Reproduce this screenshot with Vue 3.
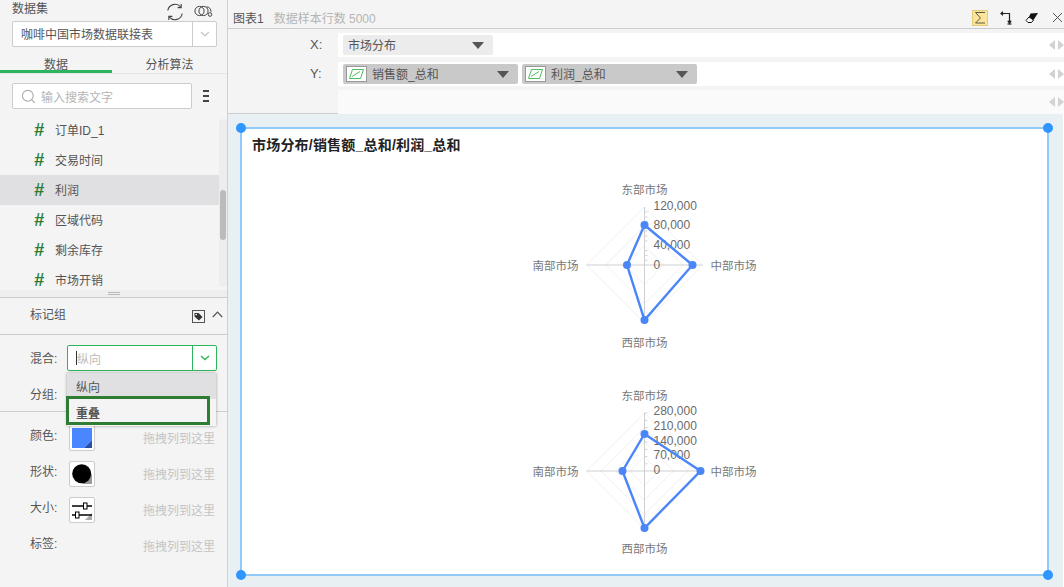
<template>
  <div class="app">
    <aside class="side">
      <div class="ds-head">
        <span class="ds-label">数据集</span>
        <svg class="ic-refresh" width="18" height="18" viewBox="0 0 18 18" fill="none" stroke="#444" stroke-width="1.1">
          <path d="M1.8 7.5A7.4 7.4 0 0 1 14.6 3.8" />
          <path d="M16.2 10.5A7.4 7.4 0 0 1 3.4 14.2" />
          <path d="M15.2 1v3.6h-3.6" />
          <path d="M2.8 17v-3.6h3.6" />
        </svg>
        <svg class="ic-link" width="20" height="14" viewBox="0 0 20 14" fill="none" stroke="#444" stroke-width="1">
          <circle cx="5.5" cy="7" r="4.6" />
          <circle cx="9.5" cy="7" r="4.6" />
          <path d="M12.5 2.8a4.6 4.6 0 0 1 4.5 5" />
          <circle cx="16" cy="10.5" r="1.8" />
        </svg>
      </div>
      <div class="ds-select">
        <span class="ds-name">咖啡中国市场数据联接表</span>
        <span class="ds-arrow">
          <svg width="10" height="6" viewBox="0 0 10 6" fill="none" stroke="#c4c4c4" stroke-width="1.2"><path d="M1 1l4 3.6L9 1" /></svg>
        </span>
      </div>
      <div class="tabs">
        <div class="tab on">数据</div>
        <div class="tab">分析算法</div>
      </div>
      <div class="search-row">
        <div class="search">
          <svg width="15" height="15" viewBox="0 0 15 15" fill="none" stroke="#aaa" stroke-width="1.1">
            <circle cx="6.8" cy="6.8" r="5.4" />
            <path d="M10.8 10.8l3 3" />
          </svg>
          <span>输入搜索文字</span>
        </div>
        <div class="menu"><i></i><i></i><i></i></div>
      </div>
      <div class="list">
        <div v-for="f in fields" :key="f" class="row" :class="{ cur: f === '利润' }">
          <span class="hash">#</span>
          <span>{{ f }}</span>
        </div>
        <div class="track"><div class="thumb"></div></div>
      </div>
      <div class="split"><i></i><i></i></div>
      <div class="mark-head">
        <span class="mark-title">标记组</span>
        <svg class="ic-tag" width="13" height="13" viewBox="0 0 13 13">
          <rect x="0.5" y="0.5" width="12" height="12" fill="#f4f4f4" stroke="#555" />
          <path d="M2.5 3h4l4 4-3.6 3.4-4.4-4z" fill="#333" />
          <circle cx="4.2" cy="4.6" r="0.8" fill="#fff" />
        </svg>
        <svg class="ic-up" width="11" height="7" viewBox="0 0 11 7" fill="none" stroke="#555" stroke-width="1.2"><path d="M0.8 6L5.5 1.2 10.2 6" /></svg>
      </div>
      <div class="form">
        <div class="form-row">
          <label>混合:</label>
          <div class="combo">
            <span class="combo-text"><b class="caret"></b>纵向</span>
            <span class="combo-arrow">
              <svg width="10" height="6" viewBox="0 0 10 6" fill="none" stroke="#2db55d" stroke-width="1.4"><path d="M1 1l4 3.6L9 1" /></svg>
            </span>
          </div>
          <div class="drop">
            <div class="opt first">纵向</div>
            <div class="opt sel">重叠</div>
          </div>
        </div>
        <div class="form-row group"><label>分组:</label></div>
      </div>
      <div class="props">
        <div v-for="p in props" :key="p.name" class="prop">
          <label>{{ p.name }}:</label>
          <div v-if="p.kind" class="swatch">
            <div v-if="p.kind === 'color'" class="sw-color"></div>
            <svg v-else-if="p.kind === 'shape'" width="20" height="20" viewBox="0 0 20 20">
              <path d="M20 10v10H10z" fill="#999" />
              <circle cx="9.7" cy="9.7" r="9.5" fill="#000" />
            </svg>
            <svg v-else width="20" height="20" viewBox="0 0 20 20">
              <path d="M20 13v7h-7z" fill="#aaa" />
              <path d="M0 6h20M0 15h20" stroke="#000" stroke-width="1.6" />
              <rect x="11.5" y="3" width="3.5" height="6" fill="#fff" stroke="#000" />
              <rect x="3.5" y="12" width="3.5" height="6" fill="#fff" stroke="#000" />
            </svg>
          </div>
          <span class="hint">拖拽列到这里</span>
        </div>
      </div>
    </aside>

    <main class="main">
      <header class="top">
        <span class="chart-name">图表1</span>
        <span class="sample">数据样本行数 5000</span>
        <div class="tools">
          <span class="sigma">
            <svg width="14" height="14" viewBox="0 0 14 14" fill="none" stroke="#5c5a3c" stroke-width="1">
              <path d="M12 1.5H2.5L7.5 7l-5 5H12" />
            </svg>
          </span>
          <svg class="t1" width="14" height="14" viewBox="0 0 14 14" fill="none" stroke="#222" stroke-width="1.2">
            <path d="M1 2.5h8.5v9" />
            <path d="M3 0.8L1 2.5l2 1.7" fill="#222" />
            <path d="M7.8 9.8l1.7 2.4 1.7-2.4" fill="#222" />
            <path d="M7.5 13h4" />
          </svg>
          <svg class="t2" width="14" height="12" viewBox="0 0 14 12">
            <path d="M5.5 1.5L13 1 8.5 8 4 5z" fill="#111" />
            <path d="M4 5l4.5 3-2 2.5H3L1 8.5z" fill="#fff" stroke="#111" />
          </svg>
          <svg class="t3" width="11" height="11" viewBox="0 0 11 11" fill="none" stroke="#555" stroke-width="1"><path d="M1 1l9 9M10 1l-9 9" /></svg>
        </div>
      </header>

      <section class="shelves">
        <div class="shelf">
          <span class="axis-name">X:</span>
          <div class="slot">
            <div class="pill light"><span class="pill-text">市场分布</span><b class="tri"></b></div>
            <div class="scroll"><b class="l"></b><b class="r"></b></div>
          </div>
        </div>
        <div class="shelf">
          <span class="axis-name">Y:</span>
          <div class="slot">
            <div v-for="m in measures" :key="m" class="pill dark">
              <span class="mini">
                <svg width="19" height="12" viewBox="0 0 19 12" fill="none" stroke="#3cb54a" stroke-width="0.9">
                  <path d="M5.5 1.5h11l-3 9h-11z" />
                  <path d="M5 8.5l8-5" />
                </svg>
              </span>
              <span class="pill-text">{{ m }}</span>
              <b class="tri"></b>
            </div>
            <div class="scroll"><b class="l"></b><b class="r"></b></div>
          </div>
        </div>
        <div class="shelf last">
          <span class="axis-name"></span>
          <div class="slot blank">
            <div class="scroll"><b class="l"></b><b class="r"></b></div>
          </div>
        </div>
      </section>

      <section class="canvas">
        <div class="card">
          <i class="dot tl"></i><i class="dot tr"></i><i class="dot bl"></i><i class="dot br"></i>
          <div class="title">市场分布/销售额_总和/利润_总和</div>
          <svg v-for="c in charts" :key="c.id" class="radar" width="805" height="200">
            <polygon v-for="r in c.rings" :key="r" :points="diamond(r)" fill="none" stroke="#f1f1f1" />
            <path :d="`M${cx - R} ${cy}H${cx + R}M${cx} ${cy - R}V${cy + R}`" stroke="#cfcfcf" fill="none" />
            <path v-for="t in c.minor" :key="t" :d="`M${cx} ${cy - t}h3`" stroke="#d4d4d4" />
            <text
              v-for="t in c.ticks"
              :key="t.label"
              class="val"
              :x="cx + 9"
              :y="cy - t.r + 4"
            >{{ t.label }}</text>
            <polygon :points="shape(c.v)" fill="none" stroke="#4a86f7" stroke-width="2.4" />
            <circle v-for="(p, i) in dots(c.v)" :key="i" :cx="p[0]" :cy="p[1]" r="4" fill="#4a86f7" />
            <text class="cat" :x="cx" :y="cy - 71" text-anchor="middle">东部市场</text>
            <text class="cat" :x="cx + 66" :y="cy + 5" >中部市场</text>
            <text class="cat" :x="cx" :y="cy + 82" text-anchor="middle">西部市场</text>
            <text class="cat" :x="cx - 66" :y="cy + 5" text-anchor="end">南部市场</text>
          </svg>
        </div>
      </section>
    </main>
  </div>
</template>

<script setup>
const fields = ['订单ID_1', '交易时间', '利润', '区域代码', '剩余库存', '市场开销']
const measures = ['销售额_总和', '利润_总和']
const props = [
  { name: '颜色', kind: 'color' },
  { name: '形状', kind: 'shape' },
  { name: '大小', kind: 'size' },
  { name: '标签', kind: '' }
]

// 雷达图的中心和半径
const cx = 402.5
const cy = 100
const R = 58

const charts = [
  {
    id: 'sales',
    v: [40, 48, 55, 17.5],
    rings: [58, 38.7, 19.3],
    ticks: [
      { label: '120,000', r: 59 },
      { label: '80,000', r: 40 },
      { label: '40,000', r: 20 },
      { label: '0', r: 0 }
    ],
    minor: [4.8, 9.6, 14.5, 24, 29, 34, 43.5, 48, 53]
  },
  {
    id: 'profit',
    v: [37, 56, 57, 22],
    rings: [58, 43.5, 29, 14.5],
    ticks: [
      { label: '280,000', r: 60 },
      { label: '210,000', r: 45 },
      { label: '140,000', r: 30 },
      { label: '70,000', r: 16 },
      { label: '0', r: 1 }
    ],
    minor: [7.2, 14.5, 21.7, 29, 36, 43.5, 50.7, 58]
  }
]

function dots(v) {
  return [
    [cx, cy - v[0]],
    [cx + v[1], cy],
    [cx, cy + v[2]],
    [cx - v[3], cy]
  ]
}

function shape(v) {
  return dots(v).map((p) => p.join(',')).join(' ')
}

function diamond(r) {
  return shape([r, r, r, r])
}
</script>

<style>
html,
body {
  margin: 0;
  background: #f4f4f4;
}
</style>

<style scoped>
.app {
  display: flex;
  width: 1064px;
  height: 587px;
  overflow: hidden;
  font: 12px "Liberation Sans", "Noto Sans CJK SC", sans-serif;
  color: #555;
  background: #f4f4f4;
}

/* 左侧面板 */
.side {
  flex: 0 0 227px;
  border-right: 1px solid #d0d0d0;
  display: flex;
  flex-direction: column;
}
.ds-head {
  height: 21px;
  padding: 0 12px;
  display: flex;
  align-items: center;
}
.ds-label {
  margin-top: -7px;
}
.ic-refresh {
  margin-left: auto;
  margin-top: 3px;
  margin-right: 10px;
}
.ic-link {
  margin-right: 1px;
}
.ds-select {
  height: 26px;
  margin: 0 10px 0 12px;
  box-sizing: border-box;
  border: 1px solid #ccc;
  border-radius: 2px;
  background: #fff;
  display: flex;
  align-items: center;
}
.ds-name {
  flex: 1;
  padding-left: 8px;
  margin-top: -2px;
}
.ds-arrow {
  width: 23px;
  height: 100%;
  border-left: 1px solid #ccc;
  display: flex;
  align-items: center;
  justify-content: center;
}
.tabs {
  height: 27px;
  display: flex;
  border-bottom: 1px solid #e6e6e6;
  box-sizing: border-box;
}
.tab {
  flex: 1;
  text-align: center;
  line-height: 37px;
  height: 26px;
  box-sizing: border-box;
}
.tab.on {
  flex: 0 0 112px;
  border-bottom: 3px solid #2db55d;
}
.search-row {
  margin: 9px 10px 0 12px;
  display: flex;
  align-items: center;
}
.search {
  width: 180px;
  height: 26px;
  box-sizing: border-box;
  border: 1px solid #ccc;
  border-radius: 2px;
  background: #fff;
  display: flex;
  align-items: center;
  gap: 5px;
  padding-left: 8px;
  color: #b5b5b5;
}
.menu {
  margin-left: 11px;
  width: 6px;
  display: flex;
  flex-direction: column;
  gap: 2.5px;
}
.menu i {
  height: 2.5px;
  background: #444;
}
.list {
  position: relative;
  margin-top: 6px;
  height: 172px;
}
.row {
  height: 30px;
  width: 219px;
  display: flex;
  line-height: 32px;
}
.row:nth-child(6) {
  height: 22px;
}
.row.cur {
  background: #e0e0e2;
}
.hash {
  width: 55px;
  padding-left: 34px;
  box-sizing: border-box;
  font: italic bold 18px/31px "Liberation Sans", sans-serif;
  color: #2e7d32;
}
.track {
  position: absolute;
  left: 219px;
  top: 4px;
  bottom: 0;
  width: 8px;
  background: #ededed;
  border-radius: 4px;
}
.thumb {
  margin: 71px 1px 0;
  height: 50px;
  border-radius: 3px;
  background: #bbb;
}
.split {
  margin-top: 3px;
  height: 5px;
  padding-top: 2px;
  background: #eee;
  border-bottom: 1px solid #ccc;
  display: flex;
  flex-direction: column;
  align-items: center;
  gap: 1px;
}
.split i {
  width: 12px;
  height: 1px;
  background: #bbb;
}
.mark-head {
  height: 36px;
  border-bottom: 1px solid #ccc;
  padding-left: 30px;
  display: flex;
  align-items: center;
}
.mark-title {
  margin-top: -6px;
}
.ic-tag {
  margin-left: auto;
  margin-right: 7px;
  margin-top: 1px;
}
.ic-up {
  margin-right: 4px;
  margin-top: -4px;
}
.form {
  height: 77px;
  padding-top: 10px;
  box-sizing: border-box;
  border-bottom: 1px solid #ccc;
}
.form-row {
  position: relative;
  display: flex;
  align-items: center;
  height: 26px;
  padding-left: 30px;
}
.form-row label {
  width: 37px;
  flex: none;
  margin-top: -2px;
}
.form-row.group {
  margin-top: 10px;
}
.combo {
  width: 150px;
  height: 26px;
  box-sizing: border-box;
  border: 1px solid #2db55d;
  border-radius: 2px;
  background: #fff;
  display: flex;
  align-items: center;
}
.combo-text {
  flex: 1;
  padding-left: 8px;
  color: #bbb;
  display: flex;
  align-items: center;
}
.caret {
  width: 1px;
  height: 14px;
  background: #333;
}
.combo-arrow {
  width: 23px;
  height: 100%;
  border-left: 1px solid #2db55d;
  display: flex;
  align-items: center;
  justify-content: center;
}
.drop {
  position: absolute;
  z-index: 3;
  left: 67px;
  top: 28px;
  width: 149px;
  height: 53px;
  background: #f4f4f4;
  box-shadow: 0 0 3px rgba(0, 0, 0, 0.35);
}
.opt {
  box-sizing: border-box;
  padding-left: 9px;
}
.first {
  height: 26px;
  line-height: 31px;
  background: #e0e0e2;
}
.sel {
  position: absolute;
  left: -1px;
  top: 23px;
  width: 144px;
  height: 29px;
  line-height: 31px;
  padding-left: 7px;
  border: 3px solid #2e7d32;
  font-weight: bold;
}
.props {
  padding-top: 6px;
}
.prop {
  position: relative;
  height: 36px;
  padding-left: 30px;
  line-height: 36px;
  display: flex;
}
.prop label {
  width: 39px;
  flex: none;
}
.swatch {
  width: 26px;
  height: 26px;
  margin-top: 7px;
  box-sizing: border-box;
  border: 1px solid #ccc;
  border-radius: 2px;
  background: #fff;
  padding: 2px;
  line-height: 0;
}
.sw-color {
  width: 20px;
  height: 20px;
  background: linear-gradient(135deg, #4a86ff 0 82%, #2b4f9e 82%);
}
.hint {
  position: absolute;
  left: 143px;
  top: 3px;
  color: #c4c4c4;
}

/* 右侧 */
.main {
  flex: 1;
  min-width: 0;
  display: flex;
  flex-direction: column;
}
.top {
  height: 28px;
  border-bottom: 1px solid #ccc;
  padding-left: 5px;
  display: flex;
  align-items: center;
  gap: 10px;
}
.chart-name,
.sample {
  margin-top: 6px;
}
.sample {
  color: #b4b4b4;
}
.tools {
  margin-left: auto;
  margin-right: 1px;
  display: flex;
  align-items: center;
  margin-top: 7px;
}
.t1 {
  margin-left: 12px;
}
.t2 {
  margin-left: 11px;
}
.t3 {
  margin-left: 13px;
}
.sigma {
  width: 16px;
  height: 16px;
  box-sizing: border-box;
  border: 1px solid #e6cc7a;
  background: #fbe59b;
  line-height: 0;
}
.shelves {
  height: 85px;
  box-sizing: border-box;
  padding-top: 4px;
  border-bottom: 1px solid #ccc;
  display: flex;
  flex-direction: column;
  gap: 5px;
}
.shelf {
  height: 24px;
  display: flex;
  align-items: center;
}
.shelf.last {
  margin-top: -1px;
}
.axis-name {
  width: 110px;
  padding: 0 0 2px 82px;
  box-sizing: border-box;
  flex: none;
  font-size: 13px;
}
.slot {
  flex: 1;
  height: 24px;
  background: #fff;
  display: flex;
  align-items: center;
  padding-left: 5px;
  gap: 4px;
  position: relative;
}
.slot.blank {
  background: #fafafa;
}
.pill {
  height: 20px;
  border-radius: 2px;
  display: flex;
  align-items: center;
  position: relative;
  box-sizing: border-box;
}
.pill-text {
  margin-top: -2px;
}
.pill.light {
  width: 150px;
  background: #ececec;
  padding-left: 5px;
}
.pill.dark {
  width: 175px;
  background: #c9c9c9;
  padding-left: 3px;
}
.mini {
  width: 21px;
  height: 16px;
  margin-right: 5px;
  box-sizing: border-box;
  border: 1px solid #999;
  background: #fff;
  display: flex;
  align-items: center;
  justify-content: center;
}
.tri {
  position: absolute;
  right: 9px;
  top: 7px;
  border-left: 6px solid transparent;
  border-right: 6px solid transparent;
  border-top: 7px solid #555;
}
.scroll {
  position: absolute;
  right: 0;
  top: 7px;
  display: flex;
  gap: 3px;
}
.scroll b {
  border-top: 5px solid transparent;
  border-bottom: 5px solid transparent;
}
.scroll .l {
  border-right: 6px solid #d2d2d2;
}
.scroll .r {
  border-left: 6px solid #d2d2d2;
}
.canvas {
  flex: 1;
  min-height: 0;
  background: #e9f0f4;
  border-right: 1px solid #fff;
  padding: 13px 14px 11px 12px;
}
.card {
  position: relative;
  height: 449px;
  box-sizing: border-box;
  border: 2px solid #90caf9;
  background: #fff;
}
.dot {
  position: absolute;
  width: 10px;
  height: 10px;
  border-radius: 50%;
  background: #2f95ff;
}
.tl {
  left: -6px;
  top: -6px;
}
.tr {
  right: -6px;
  top: -6px;
}
.bl {
  left: -6px;
  bottom: -6px;
}
.br {
  right: -6px;
  bottom: -6px;
}
.title {
  height: 36px;
  padding: 7px 0 0 10px;
  box-sizing: border-box;
  font-size: 14px;
  line-height: 18px;
  letter-spacing: 0.2px;
  font-weight: bold;
  color: #222;
}
.radar {
  display: block;
  margin-bottom: 6px;
}
.val {
  font-size: 12px;
  fill: #6a6a6a;
}
.cat {
  font-size: 11.5px;
  fill: #777;
}
</style>
